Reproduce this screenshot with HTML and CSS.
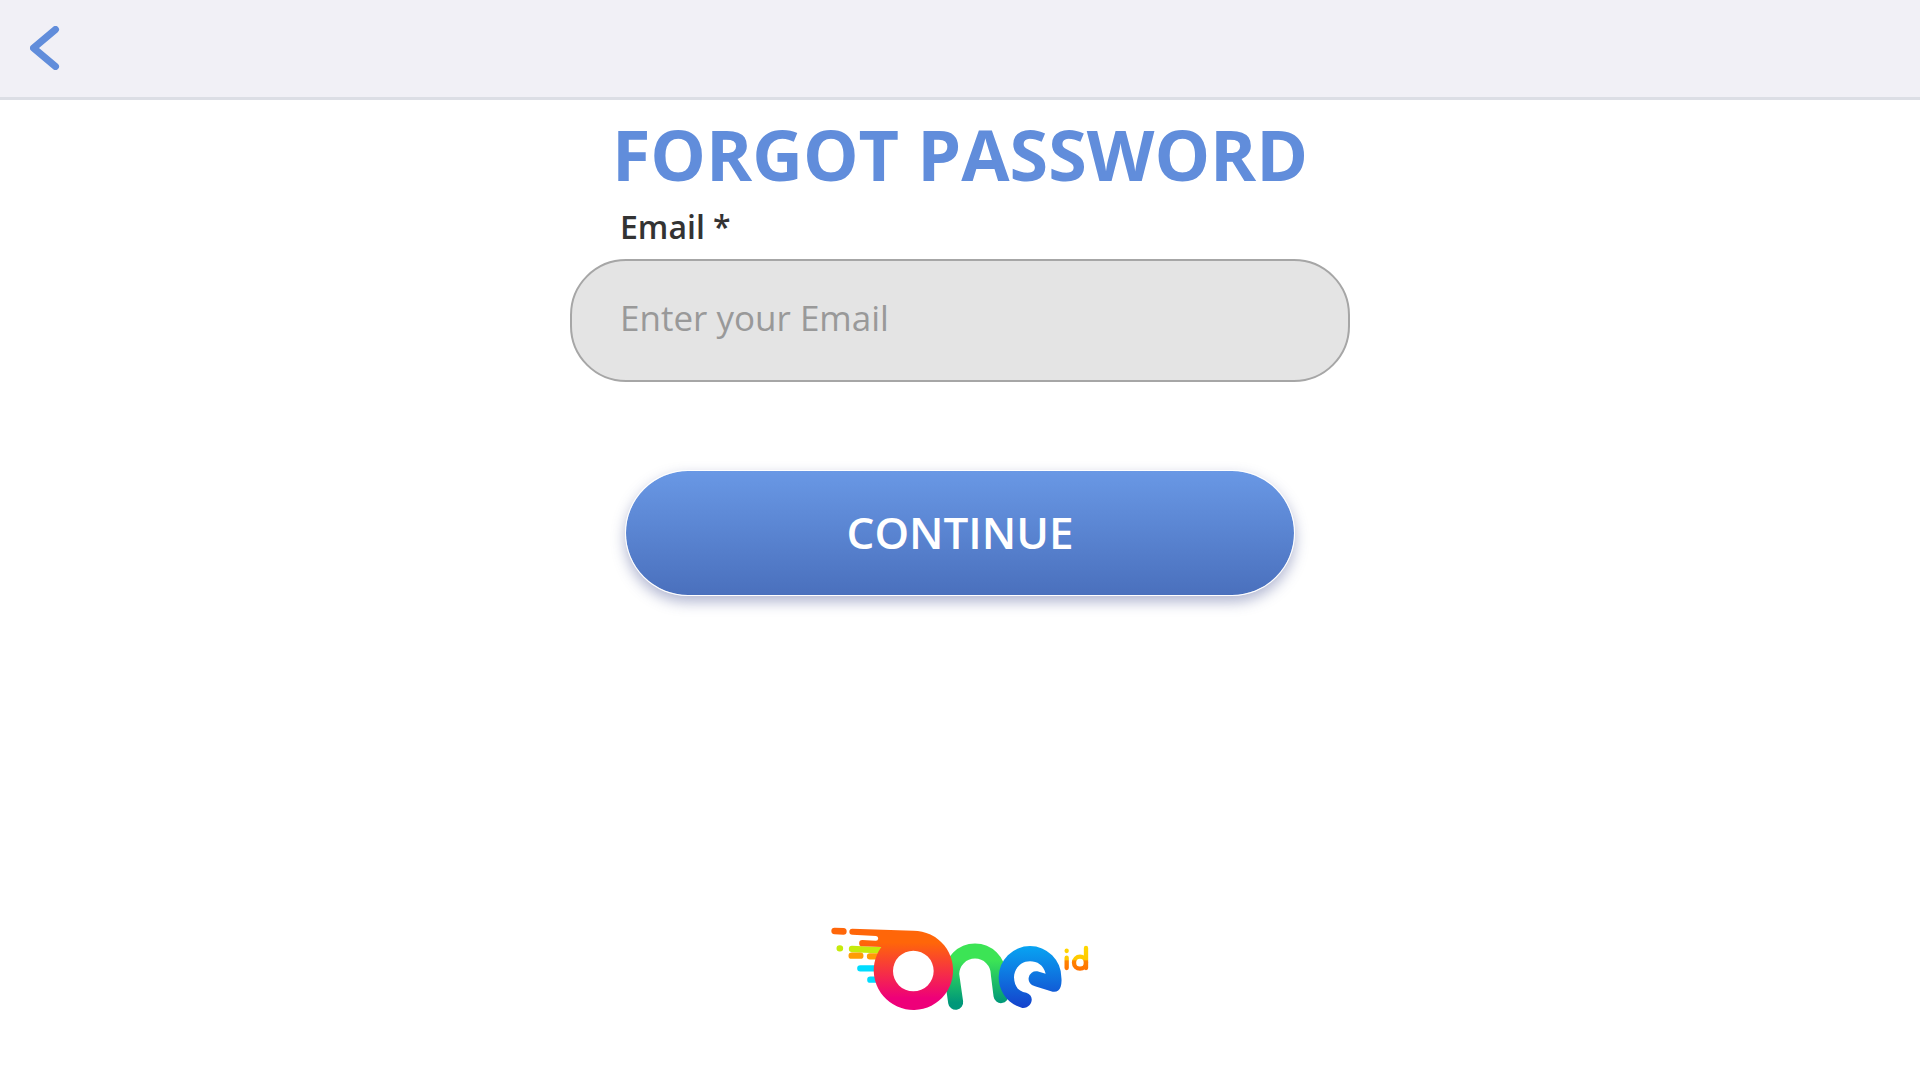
FILE: index.html
```html
<!DOCTYPE html>
<html lang="en">
<head>
<meta charset="utf-8">
<meta name="viewport" content="width=device-width, initial-scale=1">
<title>Forgot password</title>
<link rel="stylesheet" href="styles.css">
</head>
<body>
<header class="topbar">
  <a class="back" href="#" aria-label="Back">
    <svg width="30" height="44" viewBox="0 0 30 44" fill="none" stroke="currentColor" stroke-width="7" stroke-linecap="round" stroke-linejoin="round"><path d="M25.500 3.500L3.500 22L25.500 40.500"/></svg>
  </a>
</header>
<main class="page">
  <h1 class="title">FORGOT PASSWORD</h1>
  <form class="form">
    <label class="label" for="email">Email *</label>
    <input class="input" id="email" type="email" placeholder="Enter your Email">
    <button class="submit" type="button">CONTINUE</button>
  </form>
</main>
<footer class="footer">
  <svg class="logo" viewBox="0 0 786 270" role="img" aria-label="One id">
    <defs>
      <linearGradient id="red" gradientUnits="userSpaceOnUse" x1="0" y1="20" x2="0" y2="258"><stop offset=".15" stop-color="#ff6609"/><stop offset=".85" stop-color="#ee0079"/></linearGradient>
      <linearGradient id="green" gradientUnits="userSpaceOnUse" x1="0" y1="60" x2="0" y2="256"><stop offset=".25" stop-color="#3ce455"/><stop offset=".9" stop-color="#009879"/></linearGradient>
      <linearGradient id="blue" gradientUnits="userSpaceOnUse" x1="0" y1="66" x2="0" y2="253"><stop offset="0" stop-color="#08a4f2"/><stop offset="1" stop-color="#1541cc"/></linearGradient>
      <linearGradient id="gold" gradientUnits="userSpaceOnUse" x1="0" y1="64" x2="0" y2="142"><stop offset="0" stop-color="#ffd900"/><stop offset=".55" stop-color="#ffc800"/><stop offset=".6" stop-color="#ff8200"/><stop offset="1" stop-color="#ff7000"/></linearGradient>
    </defs>
    <g fill="none" stroke-width="19" stroke-linecap="round">
      <path stroke="#ff6609" stroke-width="20" d="M17 21L43 22"/>
      <path stroke="#c6ea0c" d="M32 73h1M69 75L165 79"/>
      <path stroke="#ff9c05" d="M68 95H94M123 97H155"/>
      <path stroke="#00dcff" d="M94 133H150M124 167H150"/>
    </g>
    <path fill="none" stroke="url(#green)" stroke-width="45" stroke-linecap="round" d="M380 235L368 151A70 70 0 0 1 508 151L516 215"/>
    <path fill="url(#red)" fill-rule="evenodd" d="M70 14L253 20A119 119 0 1 1 157 69L100 67A9 9 0 0 1 100 48L140 50A7 7 0 0 0 141 36L70 32A9 9 0 0 1 70 14ZM253 80A61 61 0 1 0 253 202A61 61 0 1 0 253 80Z"/>
    <path fill="url(#blue)" d="M580 252C535 240 509 201 509 160A94 94 0 0 1 697 160Q699 175 695 188Q689 206 671 203L618 187A22 22 0 0 1 625 142L650 149C643 123 625 112 603 112C575 112 555 135 555 160C556 189 570 203 592 206C620 215 609 254 580 252Z"/>
    <g fill="none" stroke="url(#gold)" stroke-width="13" stroke-linecap="round">
      <path d="M713 80v1M713 101V132M771 72V132"/><circle cx="753" cy="116" r="18"/>
    </g>
  </svg>
</footer>
</body>
</html>
```
FILE: styles.css
```css
*{box-sizing:border-box}
body{margin:0;min-height:100vh;display:flex;flex-direction:column;background:#fff;font-family:"Open Sans","Noto Sans",sans-serif;color:#333}
.topbar{height:100px;flex:none;display:flex;align-items:center;padding:0 30px 2px;background:#f1f0f6;border-bottom:3px solid #dcdee5}
.back{display:flex;color:#618ddb}
.page{flex:1;display:flex;flex-direction:column;align-items:center}
.title{margin:4px 0 0;font-size:70px;line-height:100px;font-weight:700;color:#618ddb}
.form{width:100%;max-width:780px;display:flex;flex-direction:column}
.label{padding-left:50px;font-size:32px;line-height:46px;font-weight:600}
.input{width:100%;height:123px;margin-top:9px;padding:0 48px 6px;border:2px solid #a6a6a6;border-radius:56px;background:#e4e4e4;font:400 35px/48px "Open Sans","Noto Sans",sans-serif;color:#333;outline:0}
.input::placeholder{color:#999;opacity:1}
.submit{width:86%;height:126px;margin:88px auto 0;padding:0 0 2px;border:1px solid #ffffff80;border-radius:63px;background:linear-gradient(#6998e5,#4a70bd) padding-box;box-shadow:0 6px 14px #3c488c66;font:600 44px/60px "Open Sans","Noto Sans",sans-serif;color:#fff}
.footer{display:flex;justify-content:center;padding:0 0 66px}
.logo{width:262px;height:90px}
```
